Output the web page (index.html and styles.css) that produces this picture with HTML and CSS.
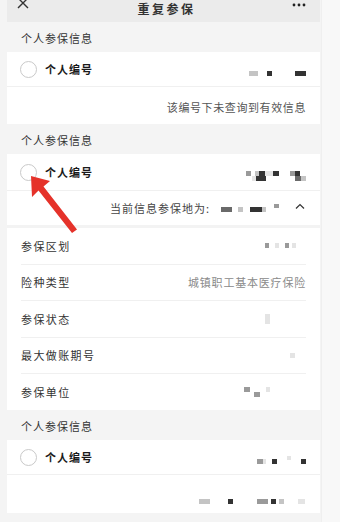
FILE: index.html
```html
<!DOCTYPE html>
<html lang="zh">
<head>
<meta charset="utf-8">
<link rel="stylesheet" href="styles.css">
</head>
<body>
<div class="page">
  <div class="col">
    <header class="topbar">
      <svg class="close" width="12" height="12" viewBox="0 0 12 12"><path d="M1 1 L11 11 M11 1 L1 11" stroke="#333" stroke-width="1.4" fill="none"/></svg>
      <div class="title">重复参保</div>
      <svg class="more" width="14" height="4" viewBox="0 0 14 4"><circle cx="2" cy="2" r="1.4" fill="#222"/><circle cx="7" cy="2" r="1.4" fill="#222"/><circle cx="12" cy="2" r="1.4" fill="#222"/></svg>
    </header>

    <div class="sec-label">个人参保信息</div>
    <section class="card">
      <div class="row head">
        <span class="radio"></span>
        <span class="pid">个人编号</span>
        <span class="mosaic low">
          <i class="b w9 c1"></i><i class="s9"></i><i class="b w5 c4"></i><i class="s23"></i><i class="b w11 c4"></i>
        </span>
      </div>
      <div class="row note"><span class="note-text">该编号下未查询到有效信息</span></div>
    </section>

    <div class="sec-label">个人参保信息</div>
    <section class="card mid">
      <div class="row head">
        <span class="radio"></span>
        <span class="pid">个人编号</span>
        <span class="mosaic two">
          <span class="mrow"><i class="b w5 c2"></i><i class="s4"></i><i class="b w4 c1"></i><i class="b w6 c4"></i><i class="b w8 c0"></i><i class="b w6 c4"></i><i class="s11"></i><i class="b w5 c2"></i><i class="b w5 c4"></i></span>
          <span class="mrow"><i class="s6"></i><i class="b w4 c0"></i><i class="b w10 c4"></i><i class="s29"></i><i class="b w6 c3"></i><i class="b w5 c1"></i></span>
        </span>
      </div>
      <div class="row place">
        <span class="place-label">当前信息参保地为:</span>
        <span class="mosaic flat">
          <i class="b w11 c3"></i><i class="s6"></i><i class="b w5 c1"></i><i class="s7"></i><i class="b w12 c4"></i><i class="b w4 c1"></i><i class="s8"></i><i class="b w5 c2 up"></i>
        </span>
        <svg class="chev" width="10" height="6" viewBox="0 0 10 6"><path d="M1 5.5 L5 1.5 L9 5.5" stroke="#333" stroke-width="1.2" fill="none"/></svg>
      </div>
      <div class="details">
        <div class="drow"><span class="dl">参保区划</span><span class="mosaic"><i class="b w4 c2"></i><i class="s6"></i><i class="b w4 c0"></i><i class="s6"></i><i class="b w4 c2"></i><i class="s3"></i><i class="b w4 c0"></i><i class="s10"></i></span></div>
        <div class="drow"><span class="dl">险种类型</span><span class="dv">城镇职工基本医疗保险</span></div>
        <div class="drow"><span class="dl">参保状态</span><span class="mosaic"><i class="b w5 tall c0"></i><i class="s36"></i></span></div>
        <div class="drow"><span class="dl">最大做账期号</span><span class="mosaic"><i class="b w5 c0"></i><i class="s11"></i></span></div>
        <div class="drow"><span class="dl">参保单位</span><span class="mosaic steps"><i class="b w6 c2"></i><i class="s4"></i><i class="b w6 c2 dn"></i><i class="s6"></i><i class="b w4 c0"></i><i class="s36"></i></span></div>
      </div>
    </section>

    <div class="sec-label">个人参保信息</div>
    <section class="card">
      <div class="row head">
        <span class="radio"></span>
        <span class="pid">个人编号</span>
        <span class="mosaic low">
          <i class="b w6 c2"></i><i class="b w3 c0"></i><i class="s6"></i><i class="b w5 c4"></i><i class="s10"></i><i class="b w4 c0 up"></i><i class="s10"></i><i class="b w5 c4"></i>
        </span>
      </div>
      <div class="row note last">
        <span class="mosaic low3">
          <i class="b w11 c1"></i><i class="s18"></i><i class="b w5 c4"></i><i class="s24"></i><i class="b w11 c2"></i><i class="s3"></i><i class="b w5 c4"></i><i class="s3"></i><i class="b w5 c1"></i><i class="s14"></i><i class="b w7 c0"></i>
        </span>
      </div>
    </section>
  </div>
  <div class="edge"></div>

  <svg class="arrow" width="70" height="75" viewBox="0 0 70 75">
    <path d="M11 11 L12 32 L18.5 25.5 L52 68 L57 64.5 L23.5 21.5 L30 16 Z" fill="#e5322a"/>
  </svg>
</div>
</body>
</html>
```

FILE: styles.css
```css
* { box-sizing: border-box; margin: 0; padding: 0; }
html, body { width: 340px; height: 522px; overflow: hidden; }
body {
  background: #f4f4f4;
  font-family: "Noto Sans CJK SC", "Noto Sans", sans-serif;
  color: #222;
}
.page { position: relative; display: flex; height: 522px; }
.col { width: 313px; margin-left: 7px; background: #f4f4f4; }
.edge { flex: 1; background: #f8f8f8; border-left: 1px solid #efefef; margin-left: 1px; }

.topbar {
  height: 22px;
  background: #ebebeb;
  display: flex;
  align-items: flex-start;
  justify-content: space-between;
  padding: 0 14px 0 10px;
}
.close { margin-top: -3px; }
.title { font-size: 12px; font-weight: 700; line-height: 14px; margin-top: 2px; letter-spacing: 2.5px; color: #333; margin-left: 12px; }
.more { margin-top: 3px; }

.sec-label {
  height: 30px;
  display: flex;
  align-items: center;
  padding-left: 14px;
  padding-top: 1px;
  font-size: 11px;
  letter-spacing: 1px;
  color: #333;
}

.card { background: #fff; }
.row { display: flex; align-items: center; padding: 0 14px 0 13px; }
.row.head { height: 35px; border-bottom: 1px solid #f0f0f0; }
.radio {
  width: 17px; height: 17px;
  border: 1px solid #c9c9c9;
  border-radius: 50%;
  margin-top: 1px;
}
.pid { font-size: 11px; font-weight: 700; letter-spacing: 1px; margin-left: 8px; color: #1a1a1a; margin-top: -1px; }

.row.note { height: 37px; justify-content: flex-end; padding-right: 14px; }
.note-text { font-size: 11px; letter-spacing: 0.6px; color: #555; margin-top: 2px; }
.row.note.last { height: 38px; padding-right: 15px; }

.card.mid .row.head { height: 37px; }
.row.place { height: 37px; justify-content: flex-end; padding-right: 15px; border-bottom: 3px solid #f3f3f3; }
.place-label { font-size: 11px; letter-spacing: 1px; color: #444; margin-right: 11px; }
.chev { margin-left: 16px; margin-top: -4px; }

.details { padding: 0 14px; }
.drow {
  height: 36.5px;
  display: flex;
  align-items: center;
  justify-content: space-between;
  border-bottom: 1px solid #f0f0f0;
  font-size: 11px;
}
.drow:last-child { border-bottom: none; height: 36px; }
.dl { letter-spacing: 1.4px; color: #333; }
.dv { letter-spacing: 0.8px; color: #8a8a8a; }

.mosaic { margin-left: auto; display: inline-flex; align-items: center; }
.mosaic.flat { margin-left: 0; margin-top: 3px; }
.mosaic.low { margin-top: 9px; }
.mosaic.low3 { margin-top: 14px; }
.mosaic.two { flex-direction: column; align-items: flex-start; margin-top: 7px; }
.mosaic.steps { align-items: flex-start; }
.mrow { display: flex; height: 5px; }
.b { display: block; height: 5px; }
.b.tall { height: 10px; }
.b.up { margin-top: -7px; height: 4px; }
.b.dn { margin-top: 5px; }
.w3 { width: 3px; } .w4 { width: 4px; } .w5 { width: 5px; } .w6 { width: 6px; }
.w7 { width: 7px; } .w8 { width: 8px; } .w9 { width: 9px; } .w10 { width: 10px; }
.w11 { width: 11px; } .w12 { width: 12px; }
.c0 { background: #e4e4e4; }
.c1 { background: #c4c4c4; }
.c2 { background: #9a9a9a; }
.c3 { background: #6a6a6a; }
.c4 { background: #333; }
.s3 { width: 3px; } .s4 { width: 4px; } .s6 { width: 6px; } .s7 { width: 7px; }
.s8 { width: 8px; } .s9 { width: 9px; } .s10 { width: 10px; } .s11 { width: 11px; }
.s14 { width: 14px; } .s18 { width: 18px; } .s23 { width: 23px; } .s24 { width: 24px; }
.s29 { width: 29px; } .s36 { width: 36px; }
.mosaic i { display: block; flex: none; }

.arrow { position: absolute; left: 20px; top: 165px; }
```
